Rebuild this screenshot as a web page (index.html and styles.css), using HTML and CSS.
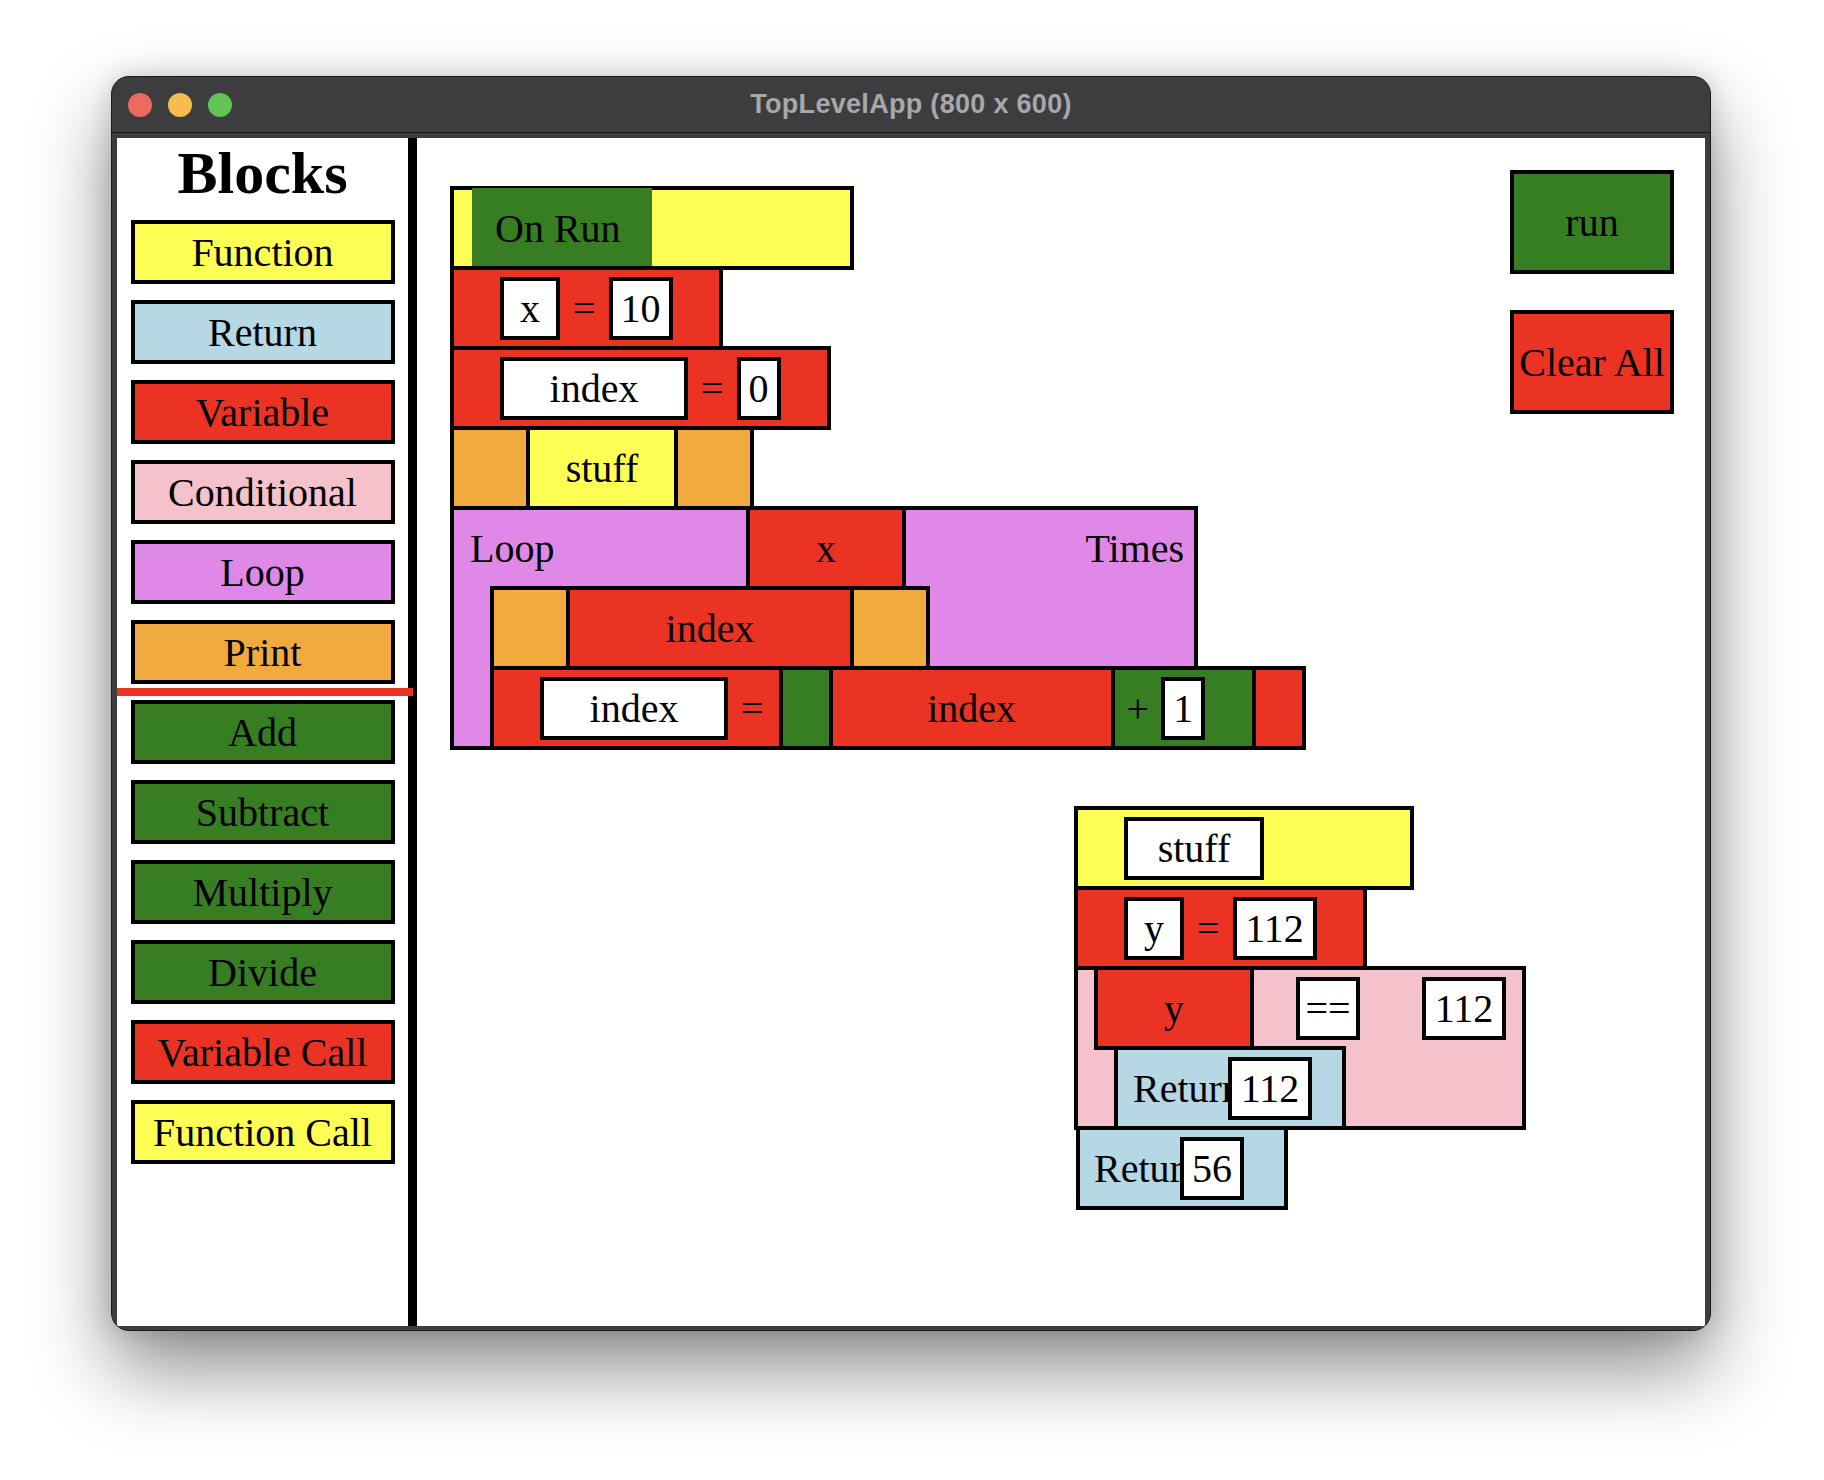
FILE: index.html
```html
<!DOCTYPE html>
<html lang="en">
<head>
<meta charset="utf-8">
<title>TopLevelApp</title>
<link rel="stylesheet" href="styles.css">
</head>
<body>
<div class="window">
  <div class="titlebar">
    <div class="lights">
      <span class="light light-close"></span>
      <span class="light light-min"></span>
      <span class="light light-max"></span>
    </div>
    <div class="title">TopLevelApp (800 x 600)</div>
    <div class="titlebar-spacer"></div>
  </div>
  <div class="frame">
    <aside class="sidebar">
      <h1 class="sidebar-title">Blocks</h1>
      <div class="palette">
        <div class="pal-btn c-yellow">Function</div>
        <div class="pal-btn c-blue">Return</div>
        <div class="pal-btn c-red">Variable</div>
        <div class="pal-btn c-pink">Conditional</div>
        <div class="pal-btn c-violet">Loop</div>
        <div class="pal-btn c-orange">Print</div>
        <div class="pal-sep"></div>
        <div class="pal-btn c-green">Add</div>
        <div class="pal-btn c-green">Subtract</div>
        <div class="pal-btn c-green">Multiply</div>
        <div class="pal-btn c-green">Divide</div>
        <div class="pal-btn c-red">Variable Call</div>
        <div class="pal-btn c-yellow">Function Call</div>
      </div>
    </aside>
    <main class="canvas">
      <div class="script script-main">
        <div class="blk blk-onrun c-yellow">
          <div class="onrun c-green">On Run</div>
        </div>
        <div class="blk blk-var c-red">
          <div class="box w-60">x</div>
          <span class="op">=</span>
          <div class="box w-64">10</div>
        </div>
        <div class="blk blk-var c-red">
          <div class="box w-188">index</div>
          <span class="op">=</span>
          <div class="box w-44">0</div>
        </div>
        <div class="blk blk-print c-orange">
          <div class="cell cell-fcall c-yellow">stuff</div>
        </div>
        <div class="blk blk-loop c-violet">
          <div class="loop-head">
            <div class="loop-label">Loop</div>
            <div class="cell cell-count c-red">x</div>
            <div class="loop-times">Times</div>
          </div>
          <div class="loop-body">
            <div class="blk blk-print blk-print-wide c-orange">
              <div class="cell cell-vcall c-red">index</div>
            </div>
            <div class="blk blk-var blk-assign c-red">
              <div class="box w-188">index</div>
              <span class="op">=</span>
              <div class="add c-green">
                <div class="cell cell-vcall-add c-red">index</div>
                <span class="op">+</span>
                <div class="box w-44">1</div>
              </div>
            </div>
          </div>
        </div>
      </div>

      <div class="script script-second">
        <div class="blk blk-fdef c-yellow">
          <div class="box w-140">stuff</div>
        </div>
        <div class="blk blk-var c-red">
          <div class="box w-60">y</div>
          <span class="op">=</span>
          <div class="box w-84">112</div>
        </div>
        <div class="blk blk-cond c-pink">
          <div class="cond-head">
            <div class="cond-var c-red">y</div>
            <div class="box w-64 cond-op">==</div>
            <div class="box w-84 cond-val">112</div>
          </div>
          <div class="cond-body">
            <div class="blk blk-ret blk-ret-inner c-blue">
              <div class="ret-label">Return</div>
              <div class="box w-84">112</div>
            </div>
          </div>
        </div>
        <div class="blk blk-ret blk-ret-outer c-blue">
          <div class="ret-label">Return</div>
          <div class="box w-64">56</div>
        </div>
      </div>

      <div class="controls">
        <div class="ctrl c-green">run</div>
        <div class="ctrl c-red">Clear All</div>
      </div>
    </main>
  </div>
</div>
</body>
</html>
```
FILE: styles.css
```css
* { box-sizing: border-box; }

html, body { margin: 0; }

body {
  width: 1824px;
  height: 1480px;
  overflow: hidden;
  background: #ffffff;
  padding: 76px 0 0 111px;
  font-family: "Liberation Serif", "Times New Roman", serif;
  color: #000;
}

/* ---------- window chrome ---------- */
.window {
  width: 1600px;
  height: 1255px;
  border: 1px solid #1b1b1d;
  border-radius: 18px;
  background: #3d3d3f;
  box-shadow: 0 38px 80px rgba(0, 0, 0, 0.45), 0 0 26px rgba(0, 0, 0, 0.16);
  display: flex;
  flex-direction: column;
  overflow: hidden;
}

.titlebar {
  height: 56px;
  flex: none;
  display: grid;
  grid-template-columns: 1fr auto 1fr;
  align-items: center;
  border-bottom: 1px solid #151516;
}

.lights {
  display: flex;
  gap: 16px;
  padding-left: 16px;
}

.light {
  width: 24px;
  height: 24px;
  border-radius: 50%;
  display: block;
}
.light-close { background: #ee6a5f; }
.light-min { background: #f5bd4f; }
.light-max { background: #61c454; }

.title {
  font-family: "Liberation Sans", Arial, sans-serif;
  font-weight: 700;
  font-size: 27px;
  color: #a8a8aa;
  letter-spacing: 0.3px;
}

.frame {
  flex: 1;
  display: flex;
  padding: 5px 5px 4px 5px;
  min-height: 0;
}

/* ---------- sidebar ---------- */
.sidebar {
  width: 300px;
  flex: none;
  background: #ffffff;
  border-right: 9px solid #000;
  display: flex;
  flex-direction: column;
  align-items: center;
}

.sidebar-title {
  margin: 0;
  font-size: 60px;
  line-height: 70px;
  font-weight: 700;
}

.palette {
  width: 100%;
  padding-top: 12px;
  display: flex;
  flex-direction: column;
  align-items: center;
  gap: 16px;
}

.pal-btn {
  width: 264px;
  height: 64px;
  border: 4px solid #000;
  font-size: 40px;
  display: flex;
  align-items: center;
  justify-content: center;
  white-space: nowrap;
}

.pal-sep {
  align-self: flex-start;
  width: 296px;
  height: 8px;
  margin: -12px 0;
  background: #ea3323;
}

/* ---------- colours ---------- */
.c-yellow { background: #fffe55; }
.c-blue { background: #b5d8e4; }
.c-red { background: #ea3323; }
.c-pink { background: #f5c2cb; }
.c-violet { background: #e088e8; }
.c-orange { background: #f1aa3d; }
.c-green { background: #377e22; }

/* ---------- canvas ---------- */
.canvas {
  flex: 1;
  position: relative;
  background: #ffffff;
  overflow: hidden;
  font-size: 40px;
}

.script {
  position: absolute;
  display: flex;
  flex-direction: column;
  align-items: flex-start;
}
.script > * + * { margin-top: -4px; }

.script-main { left: 33px; top: 48px; }
.script-second { left: 657px; top: 668px; }

.blk {
  height: 84px;
  border: 4px solid #000;
  display: flex;
  align-items: center;
  flex: none;
}

.box {
  height: 63px;
  border: 4px solid #000;
  background: #ffffff;
  display: flex;
  align-items: center;
  justify-content: center;
  flex: none;
  white-space: nowrap;
}
.w-44 { width: 44px; }
.w-60 { width: 60px; }
.w-64 { width: 64px; }
.w-84 { width: 84px; }
.w-140 { width: 140px; }
.w-188 { width: 188px; }

.op { flex: none; }

.cell {
  align-self: stretch;
  border-left: 4px solid #000;
  border-right: 4px solid #000;
  display: flex;
  align-items: center;
  justify-content: center;
  flex: none;
}

/* On Run */
.blk-onrun {
  width: 404px;
  padding-left: 18px;
}
.onrun {
  width: 180px;
  height: 80px;
  padding-left: 23px;
  display: flex;
  align-items: center;
  flex: none;
}

/* variable */
.blk-var {
  padding: 0 46px;
  gap: 13px;
}

/* print */
.blk-print {
  padding: 0 72px;
  align-items: stretch;
}
.cell-fcall { width: 152px; }
.cell-vcall { width: 288px; }

/* loop */
.blk-loop {
  width: 748px;
  height: auto;
  display: block;
}
.loop-head {
  height: 76px;
  display: flex;
}
.loop-label {
  width: 292px;
  padding-left: 16px;
  display: flex;
  align-items: center;
  flex: none;
}
.cell-count { width: 160px; }
.loop-times {
  flex: 1;
  display: flex;
  align-items: center;
  justify-content: flex-end;
  padding-right: 10px;
}
.loop-body {
  padding-left: 36px;
  display: flex;
  flex-direction: column;
  align-items: flex-start;
}
.blk-assign {
  margin-top: -4px;
  margin-bottom: -4px;
}

.add {
  align-self: stretch;
  border-left: 4px solid #000;
  border-right: 4px solid #000;
  display: flex;
  align-items: center;
  gap: 12px;
  margin-left: 2px;
  padding: 0 47px 0 46px;
  flex: none;
}
.cell-vcall-add { width: 286px; }

/* function definition */
.blk-fdef {
  width: 340px;
  padding-left: 46px;
}

/* conditional */
.blk-cond {
  width: 452px;
  height: 164px;
  display: block;
}
.cond-head {
  height: 76px;
  display: flex;
  align-items: center;
  padding-left: 16px;
}
.cond-var {
  width: 160px;
  height: 84px;
  border: 4px solid #000;
  display: flex;
  align-items: center;
  justify-content: center;
  flex: none;
}
.cond-op { margin-left: 42px; }
.cond-val { margin-left: 62px; }
.cond-body { padding-left: 36px; }

/* return */
.ret-label {
  flex: none;
  white-space: nowrap;
}
.blk-ret-inner { width: 232px; }
.blk-ret-inner .ret-label { width: 110px; padding-left: 15px; }
.blk-ret-outer { width: 212px; margin-left: 2px; }
.blk-ret-outer .ret-label { width: 100px; padding-left: 14px; }

/* controls */
.controls {
  position: absolute;
  top: 32px;
  right: 31px;
  display: flex;
  flex-direction: column;
  gap: 36px;
}
.ctrl {
  width: 164px;
  height: 104px;
  border: 4px solid #000;
  display: flex;
  align-items: center;
  justify-content: center;
  white-space: nowrap;
}
```
